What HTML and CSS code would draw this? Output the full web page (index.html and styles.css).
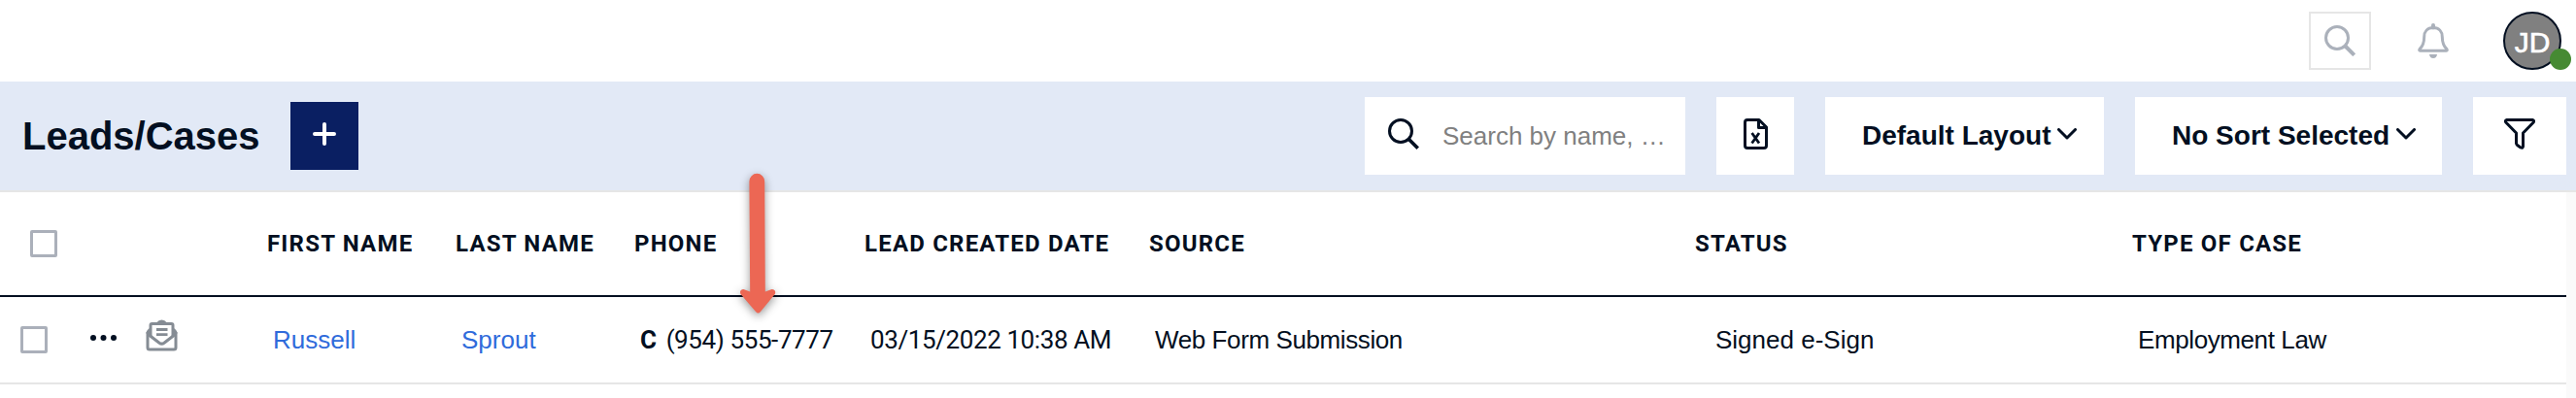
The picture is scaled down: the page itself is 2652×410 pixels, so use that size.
FILE: index.html
```html
<!DOCTYPE html>
<html lang="en">
<head>
<meta charset="utf-8">
<title>Leads/Cases</title>
<link rel="stylesheet" href="styles.css">
</head>
<body>
<header class="topbar">
  <button class="top-search" aria-label="Search">
    <svg width="32" height="32" viewBox="0 0 32 32" fill="none" stroke="#abb1bb" stroke-width="3"><circle cx="13" cy="13" r="11.5"/><path d="M21.5 21.5 30.7 30.7" stroke-width="4"/></svg>
  </button>
  <svg class="bell" width="32" height="37" viewBox="0 0 32 37" fill="none" stroke="#abb1bb" stroke-width="3" stroke-linejoin="round"><path d="M16 4.500C10 4.500 6.700 8.500 6.700 14C6.700 21 4.800 24 2 26.700Q1.200 28.300 2.500 28.300H29.500Q30.800 28.300 30 26.700C27.200 24 25.300 21 25.300 14C25.300 8.500 22 4.500 16 4.500Z"/><path d="M16 2V4.500" stroke-width="4" stroke-linecap="round"/><path d="M12 32H20Q19.500 36 16 36T12 32Z" fill="#abb1bb" stroke="none"/></svg>
  <div class="avatar">JD<span class="presence"></span></div>
</header>
<section class="toolbar">
  <h1 class="title">Leads/Cases</h1>
  <button class="add" aria-label="Add"><svg width="24" height="24" viewBox="0 0 24 24" stroke="#fff" stroke-width="4" stroke-linecap="round"><path d="M12 2V22M2 12H22"/></svg></button>
  <div class="tools">
    <div class="search">
      <svg width="32" height="32" viewBox="0 0 32 32" fill="none" stroke="#030f21" stroke-width="3"><circle cx="13" cy="13" r="11.500"/><path d="M21.500 21.500 30.700 30.700" stroke-width="3.600"/></svg>
      <span class="placeholder">Search by name, …</span>
    </div>
    <button class="tool excel" aria-label="Export"><svg width="25" height="32" viewBox="0 0 25 32" fill="none" stroke="#030f21" stroke-width="3" stroke-linejoin="round"><path d="M1.500 4Q1.500 1.500 4 1.500H16L23.500 9V28Q23.500 30.500 21 30.500H4Q1.500 30.500 1.500 28Z"/><path d="M15.500 2V9.500H23"/><path d="M8.600 15 16 25.500M16 15 8.600 25.500" stroke-width="2.800"/></svg></button>
    <button class="tool select layout">Default Layout<svg width="20" height="12" viewBox="0 0 20 12" fill="none" stroke="#030f21" stroke-width="3" stroke-linecap="round" stroke-linejoin="round"><path d="M1.500 1.500 10 10 18.500 1.500"/></svg></button>
    <button class="tool select sort">No Sort Selected<svg width="20" height="12" viewBox="0 0 20 12" fill="none" stroke="#030f21" stroke-width="3" stroke-linecap="round" stroke-linejoin="round"><path d="M1.500 1.500 10 10 18.500 1.500"/></svg></button>
    <button class="tool filter" aria-label="Filter"><svg width="32" height="32" viewBox="0 0 32 32" fill="none" stroke="#030f21" stroke-width="3" stroke-linejoin="round"><path d="M2.500 1.500H29.500Q31.500 2.500 30 4.200L19.500 15V29Q19 31 17 30L13.500 27.500Q12.500 26.500 12.500 25.500V15L2 4.200Q.500 2.500 2.500 1.500Z"/></svg></button>
  </div>
</section>
<main class="content">
  <div class="table">
    <div class="row head">
      <div class="cell lead"><span class="check"></span></div>
      <div class="cell">FIRST NAME</div>
      <div class="cell">LAST NAME</div>
      <div class="cell">PHONE</div>
      <div class="cell">LEAD CREATED DATE</div>
      <div class="cell">SOURCE</div>
      <div class="cell">STATUS</div>
      <div class="cell">TYPE OF CASE</div>
    </div>
    <div class="row data">
      <div class="cell lead">
        <span class="check"></span>
        <svg class="dots" width="28" height="6" viewBox="0 0 28 6" fill="#030f21"><circle cx="3" cy="3" r="3"/><circle cx="13.500" cy="3" r="3"/><circle cx="24" cy="3" r="3"/></svg>
        <svg class="mail" width="33" height="33" viewBox="0 0 33 33" fill="none" stroke="#858c94" stroke-width="3" stroke-linejoin="round"><path d="M2 13V29Q2 31 4 31H29Q31 31 31 29V13"/><path d="M2 15 14 24.200Q16.500 26 19 24.200L31 15"/><path d="M5 17V6Q5 4.500 6.500 4.500H26.500Q28 4.500 28 6V17"/><path d="M5 8.500Q.500 11 .500 14.500L5 17.500ZM28 8.500Q32.500 11 32.500 14.500L28 17.500ZM11 3.500Q13.500.500 16.500.500T22 3.500Z" fill="#858c94" stroke="none"/><path d="M11 10.500H22.500M11 15.700H22.500" stroke-width="2.800"/></svg>
      </div>
      <div class="cell link">Russell</div>
      <div class="cell link">Sprout</div>
      <div class="cell phone"><b>C</b><span>(954) 555-7777</span></div>
      <div class="cell date">03/15/2022 10:38 AM</div>
      <div class="cell tight">Web Form Submission</div>
      <div class="cell status">Signed e-Sign</div>
      <div class="cell tight">Employment Law</div>
    </div>
  </div>
</main>
<svg class="arrow" width="60" height="170" viewBox="750 170 60 170" fill="#ec6754"><path d="M771.400 187A7.700 8 0 0 1 787.200 187L787.800 300.500 794.500 298Q799.500 298.500 797.800 303L783 321Q780.500 324 778 321L762.500 303Q760.700 298.500 765.500 298L772.200 300.500Z"/></svg>
</body>
</html>
```
FILE: styles.css
```css
* { box-sizing: border-box; }
body {
  margin: 0;
  height: 410px;
  overflow: hidden;
  background: #fff;
  color: #030f21;
  font-family: "Liberation Sans", Arial, sans-serif;
  font-size: 26px;
}
svg { display: block; flex: none; }
button { margin: 0; padding: 0; border: 0; color: inherit; font: inherit; }
.topbar {
  display: flex;
  align-items: center;
  justify-content: flex-end;
  height: 84px;
  padding-right: 15px;
}
.top-search {
  width: 64px;
  height: 60px;
  padding: 12px 14px;
  border: 2px solid #e6e6e6;
  background: #fff;
}
.bell { margin: 0 56px 0 48px; }
.avatar {
  position: relative;
  width: 60px;
  height: 60px;
  border: 2px solid #030f21;
  border-radius: 50%;
  background: #808080;
  color: #fff;
  font-size: 30px;
  line-height: 60px;
  text-align: center;
  -webkit-text-stroke: .6px #fff;
}
.presence {
  position: absolute;
  right: -12px;
  bottom: -2px;
  width: 22px;
  height: 22px;
  border-radius: 50%;
  background: #468a33;
}
.toolbar {
  display: flex;
  align-items: center;
  height: 114px;
  padding: 0 10px 0 23px;
  border-bottom: 2px solid #e6e6e6;
  background: #e2e9f6;
}
.title { width: 276px; margin: 0; font-size: 40px; line-height: 46px; }
.add { display: flex; justify-content: center; width: 70px; height: 70px; padding-top: 21px; background: #0a1f62; }
.tools { display: flex; gap: 32px; margin-left: auto; }
.search { display: flex; width: 330px; height: 80px; padding: 22px 0 0 24px; background: #fff; }
.placeholder { margin-left: 24px; color: #808080; line-height: 37px; white-space: nowrap; }
.tool { display: flex; height: 80px; background: #fff; }
.excel { width: 80px; padding: 22px 0 0 28px; }
.select { padding: 24px 0 0 38px; font-size: 28px; font-weight: bold; line-height: 32px; white-space: nowrap; }
.select svg { margin: 8px 0 0 7px; }
.layout { width: 287px; }
.sort { width: 316px; }
.filter { width: 96px; padding: 22px 0 0 32px; }
.content { height: 212px; padding-right: 10px; background: #fafafa; }
.table { height: 100%; background: #fff; }
.row {
  display: grid;
  grid-template-columns: 275px 194px 184px 237px 293px 562px 450px 1fr;
  align-items: center;
}
.cell { white-space: nowrap; }
.head {
  height: 108px;
  border-bottom: 2px solid #030f21;
  font: bold 24px/28px Roboto, sans-serif;
  letter-spacing: 1.2px;
}
.data { height: 90px; border-bottom: 2px solid #e6e6e6; }
.data .cell { padding-left: 6px; line-height: 30px; }
.data .link { color: #2f6bdb; }
.data .status { padding-left: 21px; }
.phone, .date { font-family: Roboto, sans-serif; letter-spacing: -.4px; }
.tight { letter-spacing: -.4px; }
.phone b { margin-right: 10px; }
.check { display: block; width: 28px; height: 28px; border: 3px solid #abb0ba; border-radius: 2px; }
.head .lead { padding-left: 31px; }
.data .lead { display: flex; align-items: flex-start; padding: 0 0 7px 21px; }
.data .lead .check { margin-top: 7px; }
.dots { margin: 16px 0 0 44px; }
.mail { margin-left: 29px; }
.arrow { position: absolute; left: 750px; top: 170px; filter: drop-shadow(0 3px 5px rgb(0 0 0 / .4)); }
```
